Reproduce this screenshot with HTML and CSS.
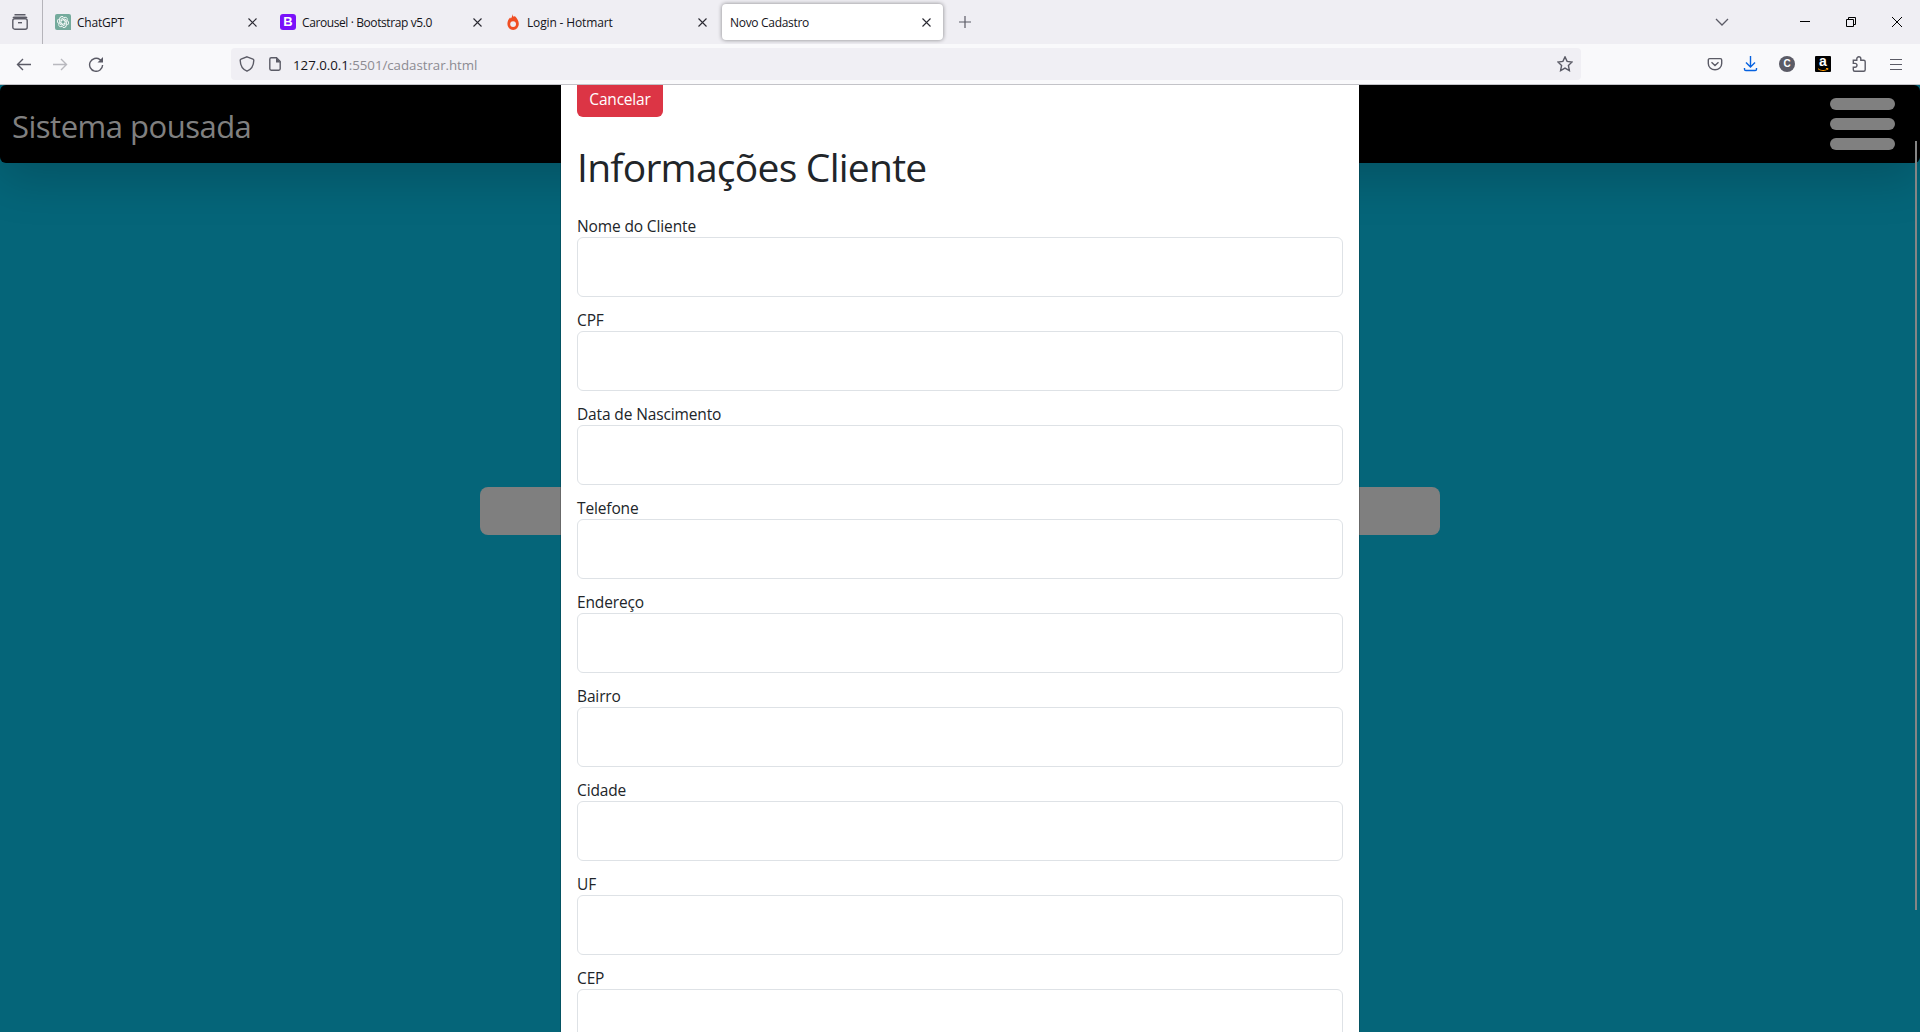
FILE: index.html
```html
<!DOCTYPE html>
<html lang="pt-BR">
<head>
<meta charset="utf-8">
<title>Novo Cadastro</title>
<link rel="stylesheet" href="styles.css">
</head>
<body>
<header class="tabs">
  <div class="view"><svg width="16" height="16" viewBox="0 0 16 16"><path d="M2.5.8h11M1 3.8C1.300 3.300 1.800 3.200 2.500 3.200h11c.7 0 1.200.1 1.500.600"/><rect x=".8" y="4.800" width="14.400" height="10.400" rx="2"/><path d="M6 8.700h4"/></svg></div>
  <div class="tab"><svg class="fav" width="16" height="16" viewBox="0 0 16 16"><path class="gpt" d="M2 0h12a2 2 0 0 1 2 2v14H2a2 2 0 0 1-2-2V2a2 2 0 0 1 2-2z"/><g class="knot"><path id="k" d="M6 9.200V5.300l2.900-1.700c1.600-.9 3.600.2 3.700 2"/><use href="#k" transform="rotate(60 8 8)"/><use href="#k" transform="rotate(120 8 8)"/><use href="#k" transform="rotate(180 8 8)"/><use href="#k" transform="rotate(240 8 8)"/><use href="#k" transform="rotate(300 8 8)"/></g></svg><span class="t1">ChatGPT</span><svg class="x" width="9" height="9" viewBox="0 0 9 9"><path d="M.5.5l8 8M8.500.5l-8 8"/></svg></div>
  <div class="tab"><b class="fav boot">B</b><span class="t2">Carousel · Bootstrap v5.0</span><svg class="x" width="9" height="9" viewBox="0 0 9 9"><path d="M.5.5l8 8M8.500.5l-8 8"/></svg></div>
  <div class="tab"><svg class="fav" width="16" height="16" viewBox="0 0 16 16"><path class="flame" d="M7.300 0c.2 1.800 1 2.300 1.700 2.800l.8-.9c2.300 2.300 4 4.700 4 8.100a5.700 5.900 0 0 1-11.400 0c0-3 1.300-4.800 2.700-6.500l.8.900C7 3.200 7.300 1.900 7.300 0z"/><circle cx="8.100" cy="10.100" r="2.900" fill="#efeef3"/></svg><span class="t3">Login - Hotmart</span><svg class="x" width="9" height="9" viewBox="0 0 9 9"><path d="M.5.5l8 8M8.500.5l-8 8"/></svg></div>
  <div class="tab active"><span class="t4">Novo Cadastro</span><svg class="x" width="9" height="9" viewBox="0 0 9 9"><path d="M.5.5l8 8M8.500.5l-8 8"/></svg></div>
  <svg class="plus" width="12" height="12" viewBox="0 0 12 12"><path d="M6 0v12M0 6h12"/></svg>
  <div class="window">
    <svg width="14" height="8" viewBox="0 0 14 8"><path class="soft" d="M1 1l6 6 6-6"/></svg>
    <svg class="min" width="10" height="10" viewBox="0 0 10 10"><path d="M0 4.500h10"/></svg>
    <svg class="max" width="10" height="10" viewBox="0 0 10 10"><path d="M.5 2.500h7v7h-7zM2.500 2V.5h7v7H8"/></svg>
    <svg class="close" width="10" height="10" viewBox="0 0 10 10"><path d="M0 0l10 10M10 0L0 10"/></svg>
  </div>
</header>
<nav class="tools">
  <svg class="back" width="16" height="16" viewBox="0 0 16 16"><path d="M15 8.500H1.500M7 3L1.500 8.500 7 14"/></svg>
  <svg class="fwd" width="16" height="16" viewBox="0 0 16 16"><path d="M1 8.500h13.500M9 3l5.500 5.500L9 14"/></svg>
  <svg class="reload" width="16" height="16" viewBox="0 0 16 16"><path d="M14.600 9A6.500 6.500 0 1 1 12 3.600l1.500 1.400"/><path class="fill" d="M15 1v5.500H9.500z"/></svg>
  <div class="url">
    <svg width="16" height="16" viewBox="0 0 16 16"><path d="M8 .8l6 2.400c.5.200.8.600.8 1.100-.1 4.500-2 9-6.800 10.900C3.200 13.300 1.300 8.800 1.200 4.300c0-.5.3-.9.800-1.100z"/></svg>
    <svg class="doc" width="12" height="14" viewBox="0 0 12 14"><path d="M2.200.8h5.300l3.700 3.700v7.300a1.400 1.400 0 0 1-1.400 1.400H2.200A1.400 1.400 0 0 1 .8 11.800V2.200A1.400 1.400 0 0 1 2.200.8z"/><path class="fill" d="M7 .5v5h4.700z"/></svg>
    <span class="address">127.0.0.1<i>:5501/cadastrar.html</i></span>
    <svg class="star" width="16" height="16" viewBox="0 0 16 16"><path d="M8 .9l2.100 4.500 5 .6-3.700 3.400 1 5.200L8 12.100l-4.400 2.500 1-5.200L.9 6l5-.6z"/></svg>
  </div>
  <div class="actions">
    <svg width="16" height="16" viewBox="0 0 16 16"><path d="M2.700 2.600h10.600c.8 0 1.400.6 1.400 1.400v3.500a6.700 6.300 0 0 1-13.400 0V4c0-.8.600-1.400 1.400-1.400zM4.500 6.300L8 9.600l3.500-3.300"/></svg>
    <svg class="down" width="16" height="16" viewBox="0 0 16 16"><path d="M7.500 0v11M3 6.500L7.500 11 12 6.500M1.500 12v1.200c0 .8.500 1.300 1.300 1.300h9.400c.8 0 1.300-.5 1.300-1.300V12"/></svg>
    <b class="account">C</b>
    <span class="amazon"><b>a</b><svg width="12" height="4" viewBox="0 0 12 4"><path d="M1 .7c3 2.400 7 2.400 9.500.3M9 .5h2L10.500 2"/></svg></span>
    <svg width="16" height="16" viewBox="0 0 16 16"><path d="M2.300 4.300h3.500v-1.500a2 2 0 0 1 4 0v1.500h2.900c.8 0 1.500.6 1.500 1.400v8c0 .8-.7 1.500-1.500 1.500H3.700c-.8 0-1.400-.7-1.400-1.500V11.200h1.800a1.900 1.900 0 0 0 0-3.800H2.300z"/></svg>
    <svg class="menu" width="12" height="11" viewBox="0 0 12 11"><path d="M0 .5h12M0 5.500h12M0 10.500h12"/></svg>
  </div>
</nav>
<main class="page">
  <div class="navbar"><span class="brand">Sistema pousada</span><div class="burger"><i></i><i></i><i></i></div></div>
  <div class="bar"></div>
  <section class="modal">
    <button class="cancel">Cancelar</button>
    <h1>Informações Cliente</h1>
    <form>
      <label>Nome do Cliente</label><input>
      <label>CPF</label><input>
      <label>Data de Nascimento</label><input>
      <label>Telefone</label><input>
      <label>Endereço</label><input>
      <label>Bairro</label><input>
      <label>Cidade</label><input>
      <label>UF</label><input>
      <label>CEP</label><input>
    </form>
  </section>
  <div class="scroll"></div>
</main>
</body>
</html>
```
FILE: styles.css
```css
* { box-sizing: border-box; }
body { margin: 0; height: 1032px; overflow: hidden; display: flex; flex-direction: column; font-family: "Open Sans", "Noto Sans", sans-serif; color: #212529; }
svg { display: block; flex: none; fill: none; stroke: #5b5b66; stroke-width: 1.4; }
.fill { fill: #5b5b66; stroke: none; }

.tabs { height: 44px; flex: none; display: flex; align-items: center; background: #efeef3; font-size: 12px; color: #15141a; }
.view { width: 43px; height: 44px; padding: 14px 0 0 12px; border-right: 1px solid #b5b4ba; }
.tab { width: 221px; height: 36px; margin-right: 4px; padding: 0 7px 0 12px; display: flex; align-items: center; white-space: nowrap; }
.tab .x { margin-left: auto; stroke: #2b2a33; stroke-width: 1.1; }
.t1 { letter-spacing: -.2px; }
.t2 { letter-spacing: -.4px; }
.t3 { letter-spacing: -.15px; }
.t4 { letter-spacing: -.3px; }
.fav { width: 16px; height: 16px; margin-right: 6px; stroke: none; }
.gpt { fill: #74aa9c; }
.knot { fill: none; stroke: #fff; stroke-width: .9; }
.boot { background: #7a12fa; border-radius: 3px; color: #fff; font: bold 13px/16px "Liberation Sans", sans-serif; text-align: center; }
.flame { fill: #f04e23; }
.active { width: 221px; margin: 0 0 0 4px; padding: 0 12px 0 8px; background: #fff; border-radius: 4px; box-shadow: 0 0 4px rgba(0,0,0,.45); }
.plus { margin-left: 16px; stroke-width: 1.2; }
.window { margin-left: auto; margin-right: 18px; display: flex; align-items: center; }
.window svg { stroke: #000; stroke-width: 1; }
.window .soft { stroke: #5b5b66; stroke-width: 1.3; }
.window .min { margin-left: 71px; }
.window .max, .window .close { margin-left: 36px; }

.tools { height: 41px; flex: none; display: flex; align-items: center; padding: 0 18px 0 16px; background: #f9f9fb; border-bottom: 1px solid #c3c3c8; }
.fwd { margin-left: 20px; opacity: .4; }
.reload { margin-left: 20px; }
.url { width: 1350px; height: 32px; margin-left: 127px; padding: 0 8px; display: flex; align-items: center; background: #f0eff4; border-radius: 4px; }
.doc { margin-left: 14px; }
.address { margin-left: 12px; padding-top: 2px; font-size: 13.300px; letter-spacing: -.04px; color: #15141a; }
.address i { font-style: normal; color: #8c8b92; }
.star { margin-left: auto; }
.actions { margin-left: auto; display: flex; align-items: center; gap: 20px; }
.menu { margin-left: 3px; stroke-width: 1.2; }
.down { stroke: #0561e0; }
.account { width: 16px; height: 16px; border-radius: 50%; background: #5b5b66; color: #fff; font: bold 10px/16px "Liberation Sans", sans-serif; text-align: center; }
.amazon { width: 16px; height: 16px; display: flex; flex-direction: column; align-items: center; background: #000; border-radius: 1px; color: #fff; }
.amazon b { font: bold 14px/11px "Liberation Sans", sans-serif; height: 12px; }
.amazon svg { stroke: #f90; stroke-width: 1; }

.page { position: relative; flex: 1; min-height: 0; overflow: hidden; background: #056579; }
.navbar { height: 78px; display: flex; align-items: center; justify-content: space-between; padding: 0 25px 0 12px; background: #000; border-radius: 6px; box-shadow: 0 16px 48px rgba(0,0,0,.175); }
.brand { padding-top: 3px; color: #808080; font-size: 31px; line-height: 48px; letter-spacing: -.5px; }
.burger { display: grid; gap: 8px; }
.burger i { width: 65px; height: 12px; border-radius: 6px; background: #808080; }
.bar { width: 960px; height: 48px; margin: 324px auto 0; border-radius: 8px; background: #7f7f7f; }
/* dialog scrolled down by a few pixels, over the page */
.modal { position: absolute; top: -100px; left: 560px; width: 800px; height: 1200px; padding: 94px 16px 0; background: #fff; background-clip: padding-box; border: 1px solid rgba(0,0,0,.175); border-width: 0 1px; }
.cancel { display: block; width: 86px; height: 38px; padding: 2px 0 0; border: 0; border-radius: 6px; background: #dc3545; color: #fff; font: 15.500px/24px "Open Sans", sans-serif; letter-spacing: -.2px; }
h1 { margin: 26px 0 22px; height: 48px; font-size: 39px; line-height: 48px; font-weight: 400; letter-spacing: -.75px; }
form { display: flex; flex-direction: column; }
label { height: 24px; padding-top: 1px; font-size: 15.500px; line-height: 24px; letter-spacing: -.13px; }
input { width: 100%; height: 60px; margin: 0 0 10px; padding: 0; border: 1px solid #dee2e6; border-radius: 6px; background: #fff; }
.scroll { position: absolute; left: 1915px; top: 56px; width: 2px; height: 769px; background: #858585; }
```
